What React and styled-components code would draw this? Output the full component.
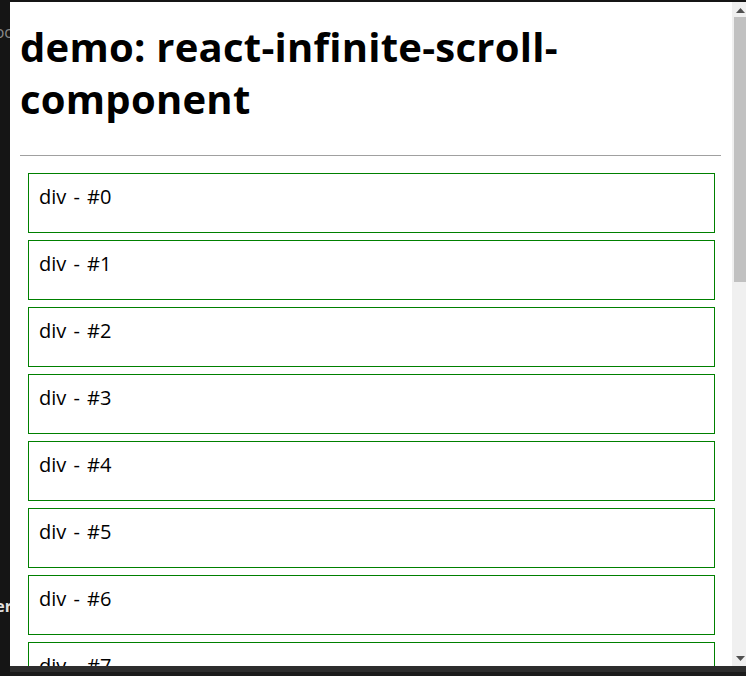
import React from "react";
import styled, { createGlobalStyle } from "styled-components";

const Global = createGlobalStyle`
  html, body { margin: 0; padding: 0; background: #151515; }
  body { font-family: "Open Sans", "Noto Sans", sans-serif; overflow: hidden; }
`;

const Page = styled.div`
  width: 746px;
  height: 676px;
  display: flex;
  background: #151515;
  overflow: hidden;
`;

const Gutter = styled.div`
  width: 10px;
  flex: none;
  display: flex;
  flex-direction: column;
  align-items: flex-end;
  overflow: hidden;
`;

const GhostText = styled.span`
  display: block;
  white-space: nowrap;
  margin-top: ${(p) => p.$top}px;
  margin-right: -2px;
  font-family: "Open Sans", sans-serif;
  font-size: 16px;
  font-weight: ${(p) => (p.$bold ? 700 : 400)};
  color: ${(p) => p.$color};
  line-height: 16px;
`;

const Frame = styled.div`
  flex: 1;
  display: flex;
  flex-direction: column;
`;

const TopStrip = styled.div`
  height: 2px;
  background: #151515;
  flex: none;
`;

const Window = styled.div`
  height: 664px;
  display: flex;
  flex: none;
`;

const Content = styled.div`
  flex: 1;
  background: #fff;
  overflow: hidden;
  padding: 0 0 0 10px;
`;

const Title = styled.h1`
  margin: 19px 0 0;
  font-size: 40px;
  line-height: 52px;
  letter-spacing: 0.25px;
  font-weight: 700;
  color: #000;
  width: 590px;
`;

const Rule = styled.hr`
  margin: 30px 0 0;
  width: 701px;
  border: none;
  border-top: 1px solid #a0a0a0;
  height: 0;
`;

const List = styled.div`
  margin-top: 17px;
  padding: 0 6px 0 8px;
  width: 687px;
`;

const Item = styled.div`
  box-sizing: border-box;
  height: 60px;
  margin-bottom: 7px;
  border: 1px solid #008000;
  padding: 10px 10px;
  font-size: 20px;
  line-height: 26px;
  word-spacing: 2px;
  color: #000;
`;

const Scrollbar = styled.div`
  width: 14px;
  flex: none;
  background: #f0f0f0;
  display: flex;
  flex-direction: column;
  align-items: flex-end;
`;

const Arrow = styled.div`
  height: 15px;
  width: 12px;
  display: flex;
  align-items: center;
  justify-content: center;
`;

const Thumb = styled.div`
  width: 12px;
  height: 265px;
  background: #c1c1c1;
`;

const Spacer = styled.div`
  flex: 1;
`;

const BottomStrip = styled.div`
  height: 10px;
  flex: none;
  display: flex;
  flex-direction: column;
`;

const StripLight = styled.div`
  height: 6px;
  background: #2d2d2d;
`;

const StripDark = styled.div`
  flex: 1;
  background: #1b1b1b;
`;

const Tri = ({ up }) => (
  <svg width="9" height="6" viewBox="0 0 9 6">
    <path d={up ? "M0 6 L4.5 1 L9 6 Z" : "M0 0 L4.5 5 L9 0 Z"} fill="#505050" />
  </svg>
);

export default function App() {
  const items = Array.from({ length: 8 }, (_, i) => i);
  return (
    <>
      <Global />
      <Page>
        <Gutter>
          <GhostText $top={24} $color="#8a8a8a">oc</GhostText>
          <GhostText $top={558} $color="#e0e0e0" $bold>er</GhostText>
        </Gutter>
        <Frame>
          <TopStrip />
          <Window>
            <Content>
              <Title>demo: react-infinite-scroll-component</Title>
              <Rule />
              <List>
                {items.map((i) => (
                  <Item key={i}>div - #{i}</Item>
                ))}
              </List>
            </Content>
            <Scrollbar>
              <Arrow><Tri up /></Arrow>
              <Thumb />
              <Spacer />
              <Arrow><Tri /></Arrow>
            </Scrollbar>
          </Window>
          <BottomStrip>
            <StripLight />
            <StripDark />
          </BottomStrip>
        </Frame>
      </Page>
    </>
  );
}
